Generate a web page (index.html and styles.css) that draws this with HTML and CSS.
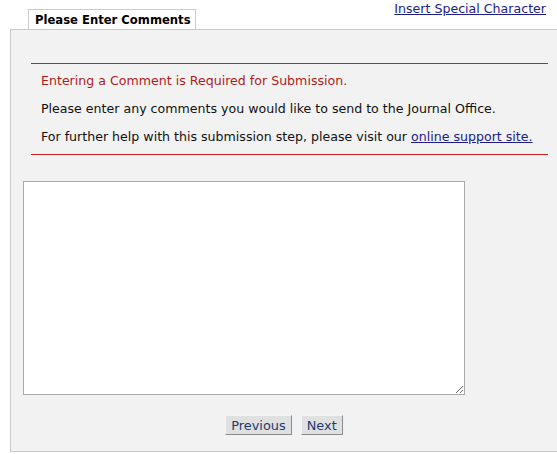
FILE: index.html
```html
<!DOCTYPE html>
<html>
<head>
<meta charset="utf-8">
<link rel="stylesheet" href="styles.css">
</head>
<body>
<div class="wrap">
  <div class="head">
    <div class="tab">Please Enter Comments</div>
    <a class="special" href="#">Insert Special Character</a>
  </div>
  <div class="panel">
    <div class="notice">
      <div class="rule"></div>
      <div class="msgs">
        <p class="req">Entering a Comment is Required for Submission.</p>
        <p>Please enter any comments you would like to send to the Journal Office.</p>
        <p>For further help with this submission step, please visit our <a href="#">online support site.</a></p>
      </div>
      <div class="rule"></div>
    </div>
    <textarea class="comments"></textarea>
    <div class="buttons">
      <button class="btn">Previous</button>
      <button class="btn">Next</button>
    </div>
  </div>
</div>
</body>
</html>
```
FILE: styles.css
```css
html, body {
  margin: 0;
  padding: 0;
  background: #ffffff;
}
body {
  font-family: Tahoma, "DejaVu Sans", sans-serif;
  font-size: 12.6px;
  color: #111111;
}
.wrap {
  margin-left: 10px;
  width: 548px;
}
.head {
  display: flex;
  justify-content: space-between;
  align-items: flex-start;
  height: 29px;
}
.tab {
  margin-left: 18px;
  margin-top: 9px;
  height: 20px;
  box-sizing: border-box;
  width: 168px;
  white-space: nowrap;
  border: 1px solid #cccccc;
  border-bottom: none;
  background: #ffffff;
  font-family: "DejaVu Sans Condensed", "DejaVu Sans", sans-serif;
  font-weight: bold;
  font-size: 12.9px;
  line-height: 19px;
  padding-left: 6px;
  color: #000000;
}
.special {
  margin-top: 1px;
  margin-right: 12px;
  color: #1c1c8c;
  font-size: 12.6px;
  text-decoration: underline;
  line-height: 15px;
}
.panel {
  box-sizing: border-box;
  height: 423px;
  border: 1px solid #c9c9c9;
  background: #f2f2f2;
  padding-top: 33px;
}
.notice {
  margin: 0 9px 0 20px;
}
.rule {
  height: 1px;
  background: #cc2020;
}
.msgs {
  padding: 3px 0 3px 10px;
}
.msgs p {
  margin: 0;
  line-height: 28px;
}
.msgs .req {
  color: #b01c1c;
}
.msgs a {
  color: #1c1c8c;
}
.comments {
  display: block;
  margin: 26px 0 0 12px;
  width: 442px;
  height: 214px;
  box-sizing: border-box;
  border: 1px solid #a9a9a9;
  background: #ffffff;
  resize: both;
}
.buttons {
  display: flex;
  justify-content: center;
  gap: 9px;
  margin-top: 20px;
}
.btn {
  font-family: Tahoma, "DejaVu Sans", sans-serif;
  font-size: 12.9px;
  color: #1e3a68;
  background: #dfe0e2;
  border: 1px solid;
  border-color: #f4f4f4 #8a8a8a #8a8a8a #f4f4f4;
  height: 20px;
  padding: 0 5px;
  line-height: 17px;
}
```
